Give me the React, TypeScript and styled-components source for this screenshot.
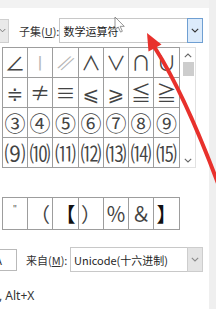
import React from "react";
import styled, { createGlobalStyle } from "styled-components";

const GlobalStyle = createGlobalStyle`
  html, body {
    margin: 0;
    padding: 0;
    background: #fff;
  }
  body {
    width: 216px;
    height: 309px;
    overflow: hidden;
    font-family: "Noto Sans CJK SC", "Noto Sans", sans-serif;
  }
`;

const Page = styled.div`
  position: relative;
  width: 216px;
  height: 309px;
  display: flex;
  overflow: hidden;
  background: #fff;
`;

const Main = styled.div`
  width: 209px;
  display: flex;
  flex-direction: column;
  border-top: 8px solid #f2f2f2;
`;

const RightEdge = styled.div`
  width: 7px;
  background: #efefef;
`;

const FieldRow = styled.div<{ $top: number }>`
  display: flex;
  align-items: center;
  height: 25px;
  margin-top: ${(p) => p.$top}px;
`;

const Stub = styled.div`
  width: 10px;
  height: 24px;
  margin-left: -1px;
  box-sizing: border-box;
  border: 1px solid #cfcfcf;
  border-left: none;
  background: #e9e9e9;
  display: flex;
  align-items: center;
  justify-content: flex-end;
  padding-right: 2px;
`;

const Label = styled.span<{ $left: number }>`
  margin-left: ${(p) => p.$left}px;
  font-size: 11px;
  color: #333;
  white-space: nowrap;
  u {
    text-underline-offset: 1px;
  }
`;

const Combo = styled.div<{ $width: number }>`
  margin-left: auto;
  margin-right: 6px;
  width: ${(p) => p.$width}px;
  height: 25px;
  box-sizing: border-box;
  border: 1px solid #c8c8c8;
  display: flex;
  align-items: center;
  font-size: 11px;
  color: #1e1e1e;
  background: #fff;
`;

const ComboText = styled.span`
  flex: 1;
  padding-left: 3px;
  white-space: nowrap;
`;

const ComboButton = styled.div<{ $active?: boolean }>`
  width: 16px;
  height: 25px;
  margin: -1px -1px -1px 0;
  box-sizing: border-box;
  display: flex;
  align-items: center;
  justify-content: center;
  background: ${(p) => (p.$active ? "#dcebfb" : "#e4e4e4")};
  border: 1px solid ${(p) => (p.$active ? "#6f9fd2" : "#cdcdcd")};
`;

const GridBox = styled.div`
  display: flex;
  margin: 4px 0 0 2px;
`;

const CharGrid = styled.div<{ $row: number }>`
  display: grid;
  grid-template-columns: 24px 24px 25px 24px 24px 24px 25px;
  grid-auto-rows: ${(p) => p.$row}px;
  gap: 1px;
  padding: 1px;
  background: #9d9d9d;
  width: max-content;
`;

const Cell = styled.div<{ $size: number; $tone?: "light" | "dark" | "ink" }>`
  background: #fff;
  display: flex;
  align-items: center;
  justify-content: center;
  overflow: hidden;
  font-family: "Noto Sans CJK SC", "DejaVu Sans", sans-serif;
  font-size: ${(p) => p.$size}px;
  line-height: 1;
  color: ${(p) =>
    p.$tone === "light" ? "#b4b4b4" : p.$tone === "ink" ? "#111" : "#444"};
`;

const Slant = styled.span`
  display: inline-block;
  transform: skewX(-28deg) scaleY(0.9);
`;

const Small = styled.span`
  font-size: 9px;
  margin-top: -10px;
  color: #555;
`;

const ScrollTrack = styled.div`
  width: 16px;
  height: 121px;
  box-sizing: border-box;
  border: 1px solid #e2e2e2;
  border-left: none;
  display: flex;
  flex-direction: column;
  align-items: center;
`;

const ScrollArrow = styled.div`
  height: 14px;
  display: flex;
  align-items: center;
  justify-content: center;
`;

const Thumb = styled.div`
  width: 11px;
  height: 14px;
  margin-left: 1px;
  background: #cdcdcd;
`;

const Spacer = styled.div`
  flex: 1;
`;

const RecentBox = styled.div`
  margin: 29px 0 0 2px;
`;

const CodeBox = styled.div`
  width: 45px;
  height: 22px;
  margin-left: -28px;
  box-sizing: border-box;
  border: 1px solid #b9b9b9;
  padding-left: 4px;
  display: flex;
  align-items: center;
  font-size: 11px;
  color: #333;
`;

const Shortcut = styled.div`
  margin: 16px 0 0 -1px;
  font-family: "Noto Sans", "Liberation Sans", sans-serif;
  font-size: 12px;
  line-height: 16px;
  color: #333;
  white-space: nowrap;
`;

const Overlay = styled.svg`
  position: absolute;
  left: 0;
  top: 0;
  pointer-events: none;
`;

const Chevron = ({ up, color = "#444" }: { up?: boolean; color?: string }) => (
  <svg width="8" height="5" viewBox="0 0 8 5">
    <polyline
      points={up ? "0.8,4.2 4,1 7.2,4.2" : "0.8,0.8 4,4 7.2,0.8"}
      fill="none"
      stroke={color}
      strokeWidth="1.1"
    />
  </svg>
);

type Sym = { c: React.ReactNode; tone?: "light" | "dark" | "ink" };

const mainRows: Sym[][] = [
  [
    { c: "∠" },
    { c: "∣", tone: "light" },
    { c: <Slant>∥</Slant>, tone: "light" },
    { c: "∧" },
    { c: "∨" },
    { c: "∩" },
    { c: "∪" },
  ],
  [
    { c: "≑" },
    { c: "≠" },
    { c: "≡" },
    { c: "⩽" },
    { c: "⩾" },
    { c: "≦" },
    { c: "≧" },
  ],
  ["③", "④", "⑤", "⑥", "⑦", "⑧", "⑨"].map((c) => ({ c, tone: "dark" as const })),
  ["⑼", "⑽", "⑾", "⑿", "⒀", "⒁", "⒂"].map((c) => ({ c, tone: "dark" as const })),
];

const recent: Sym[] = [
  { c: <Small>"</Small> },
  { c: "（" },
  { c: "【", tone: "ink" },
  { c: "）" },
  { c: "％" },
  { c: "＆" },
  { c: "】", tone: "ink" },
];

export default function App() {
  return (
    <Page>
      <GlobalStyle />
      <Main>
        <FieldRow $top={10}>
          <Stub>
            <Chevron color="#777" />
          </Stub>
          <Label $left={10}>
            子集(<u>U</u>):
          </Label>
          <Combo $width={144}>
            <ComboText>数学运算符</ComboText>
            <ComboButton $active>
              <Chevron color="#333" />
            </ComboButton>
          </Combo>
        </FieldRow>

        <GridBox>
          <CharGrid $row={29}>
            {mainRows.map((row, r) =>
              row.map((cell, i) => (
                <Cell key={`${r}-${i}`} $size={r < 2 ? 20 : 21} $tone={cell.tone}>
                  {cell.c}
                </Cell>
              ))
            )}
          </CharGrid>
          <ScrollTrack>
            <ScrollArrow>
              <Chevron up color="#666" />
            </ScrollArrow>
            <Thumb />
            <Spacer />
            <ScrollArrow>
              <Chevron color="#666" />
            </ScrollArrow>
          </ScrollTrack>
        </GridBox>

        <RecentBox>
          <CharGrid $row={31}>
            {recent.map((cell, i) => (
              <Cell key={i} $size={20} $tone={cell.tone}>
                {cell.c}
              </Cell>
            ))}
          </CharGrid>
        </RecentBox>

        <FieldRow $top={17}>
          <CodeBox>221A</CodeBox>
          <Label $left={9}>
            来自(<u>M</u>):
          </Label>
          <Combo $width={133}>
            <ComboText>Unicode(十六进制)</ComboText>
            <ComboButton>
              <Chevron color="#8a8a8a" />
            </ComboButton>
          </Combo>
        </FieldRow>

        <Shortcut>, Alt+X</Shortcut>
      </Main>
      <RightEdge />

      <Overlay width="216" height="309" viewBox="0 0 216 309">
        <g transform="translate(115 17) scale(0.82)" opacity="0.75">
          <path
            d="M0 0 L0 16 L4 12.3 L6.8 18.4 L9 17.4 L6.3 11.4 L11.3 11.4 Z"
            fill="#fff"
            stroke="#555"
            strokeWidth="1"
            strokeLinejoin="round"
          />
        </g>
        <path
          d="M155 48 Q185 95 219 186"
          fill="none"
          stroke="#e8312c"
          strokeWidth="4"
          strokeLinecap="round"
        />
        <polygon points="147,33 161.5,44.5 148.5,51.5" fill="#e8312c" />
      </Overlay>
    </Page>
  );
}
